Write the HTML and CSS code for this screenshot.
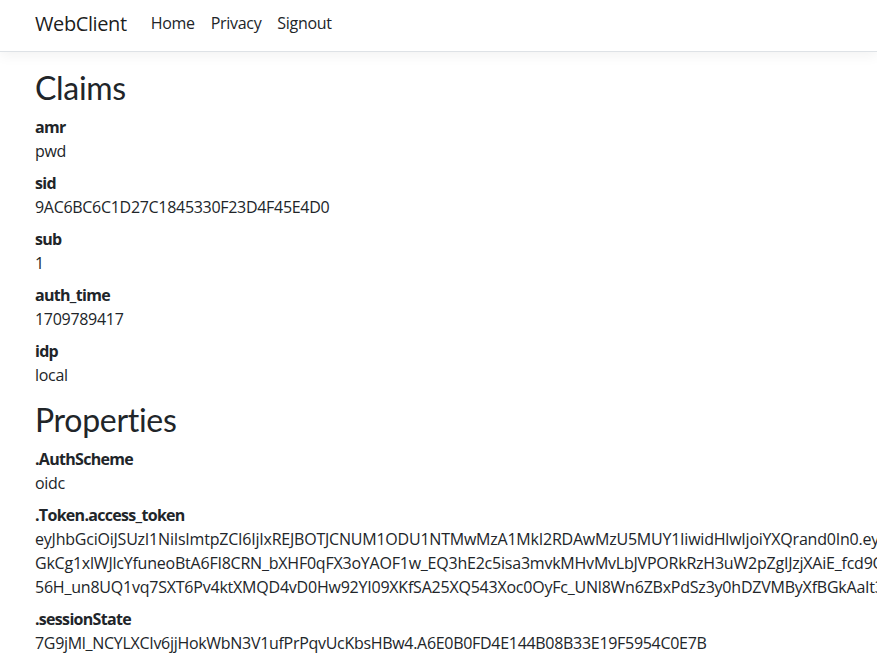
FILE: index.html
```html
<!DOCTYPE html>
<html lang="en">
<head>
<meta charset="utf-8">
<title>WebClient</title>
<link rel="stylesheet" href="styles.css">
</head>
<body>
<header class="site-header">
  <nav class="navbar">
    <a class="brand" href="#">WebClient</a>
    <ul class="nav">
      <li><a class="nav-link" href="#">Home</a></li>
      <li><a class="nav-link" href="#">Privacy</a></li>
      <li><a class="nav-link" href="#">Signout</a></li>
    </ul>
  </nav>
</header>
<main class="content">
  <h1 class="heading">Claims</h1>
  <dl class="kv">
    <dt>amr</dt>
    <dd>pwd</dd>
    <dt>sid</dt>
    <dd>9AC6BC6C1D27C1845330F23D4F45E4D0</dd>
    <dt>sub</dt>
    <dd>1</dd>
    <dt>auth_time</dt>
    <dd>1709789417</dd>
    <dt>idp</dt>
    <dd>local</dd>
  </dl>
  <h1 class="heading">Properties</h1>
  <dl class="kv">
    <dt>.AuthScheme</dt>
    <dd>oidc</dd>
    <dt>.Token.access_token</dt>
    <dd class="token">eyJhbGciOiJSUzI1NiIsImtpZCI6IjIxREJBOTJCNUM1ODU1NTMwMzA1MkI2RDAwMzU5MUY1IiwidHlwIjoiYXQrand0In0.eyJpc3MiOiJodHRwczovL2xvY2FsaG9zdDo1MDAxIiwibmJmIjoxNzA5Nzg5NDE3<br>GkCg1xlWJlcYfuneoBtA6FI8CRN_bXHF0qFX3oYAOF1w_EQ3hE2c5isa3mvkMHvMvLbJVPORkRzH3uW2pZgIJzjXAiE_fcd9Qm2aTq7XbL0pWvK3d<br>56H_un8UQ1vq7SXT6Pv4ktXMQD4vD0Hw92YI09XKfSA25XQ543Xoc0OyFc_UNl8Wn6ZBxPdSz3y0hDZVMByXfBGkAaIt3wR8sJqL2mN5vT</dd>
    <dt>.sessionState</dt>
    <dd>7G9jMl_NCYLXCIv6jjHokWbN3V1ufPrPqvUcKbsHBw4.A6E0B0FD4E144B08B33E19F5954C0E7B</dd>
  </dl>
</main>
</body>
</html>
```
FILE: styles.css
```css
html, body {
  overflow-x: hidden;
}

body {
  margin: 0;
  font-family: "Open Sans", "Noto Sans", "Liberation Sans", sans-serif;
  font-size: 16px;
  line-height: 24px;
  letter-spacing: -0.3px;
  color: #212529;
  background: #fff;
}

.site-header {
  position: relative;
  z-index: 1;
}

.navbar {
  box-sizing: border-box;
  height: 52px;
  display: flex;
  align-items: flex-start;
  padding: 9px 35px 0;
  background: #fff;
  border-bottom: 1px solid #dee2e6;
  box-shadow: 0 4px 12px rgba(0, 0, 0, 0.05);
}

.brand {
  font-size: 20px;
  line-height: 30px;
  letter-spacing: -0.4px;
  color: rgba(0, 0, 0, 0.9);
  text-decoration: none;
  margin-right: 16px;
}

.nav {
  display: flex;
  list-style: none;
  margin: 0;
  padding: 2px 0 0;
}

.nav-link {
  display: block;
  padding: 0 8px;
  line-height: 24px;
  color: #212529;
  text-decoration: none;
}

.content {
  padding: 15px 35px 16px;
}

.heading {
  font-family: Lato, "Open Sans", sans-serif;
  font-size: 32px;
  font-weight: 400;
  font-variant-ligatures: none;
  letter-spacing: -0.3px;
  line-height: 42px;
  margin: 0 0 6px;
}

.kv {
  margin: 0 0 12px;
}

.kv dt {
  font-weight: 700;
  letter-spacing: -0.7px;
}

.kv dd {
  margin: 0 0 8px;
}

.token {
  white-space: nowrap;
  letter-spacing: -0.22px;
}
```
